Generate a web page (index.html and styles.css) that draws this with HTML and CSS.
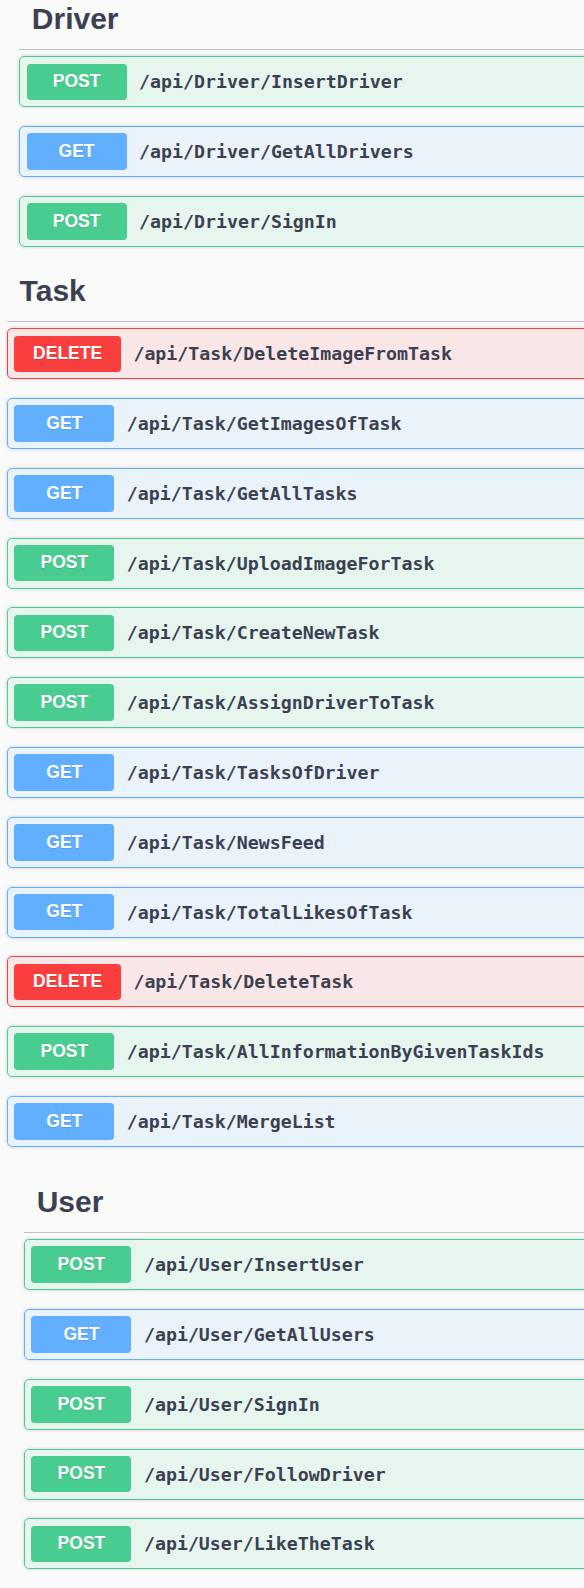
FILE: index.html
```html
<!DOCTYPE html>
<html lang="en">
<head>
<meta charset="utf-8">
<title>API</title>
<link rel="stylesheet" href="styles.css">
</head>
<body>
<section class="tag-section driver">
  <h3 class="tag">Driver</h3>
  <div class="op post"><span class="method">POST</span><span class="path">/api/Driver/InsertDriver</span></div>
  <div class="op get"><span class="method">GET</span><span class="path">/api/Driver/GetAllDrivers</span></div>
  <div class="op post"><span class="method">POST</span><span class="path">/api/Driver/SignIn</span></div>
</section>
<section class="tag-section task">
  <h3 class="tag">Task</h3>
  <div class="op delete"><span class="method">DELETE</span><span class="path">/api/Task/DeleteImageFromTask</span></div>
  <div class="op get"><span class="method">GET</span><span class="path">/api/Task/GetImagesOfTask</span></div>
  <div class="op get"><span class="method">GET</span><span class="path">/api/Task/GetAllTasks</span></div>
  <div class="op post"><span class="method">POST</span><span class="path">/api/Task/UploadImageForTask</span></div>
  <div class="op post"><span class="method">POST</span><span class="path">/api/Task/CreateNewTask</span></div>
  <div class="op post"><span class="method">POST</span><span class="path">/api/Task/AssignDriverToTask</span></div>
  <div class="op get"><span class="method">GET</span><span class="path">/api/Task/TasksOfDriver</span></div>
  <div class="op get"><span class="method">GET</span><span class="path">/api/Task/NewsFeed</span></div>
  <div class="op get"><span class="method">GET</span><span class="path">/api/Task/TotalLikesOfTask</span></div>
  <div class="op delete"><span class="method">DELETE</span><span class="path">/api/Task/DeleteTask</span></div>
  <div class="op post"><span class="method">POST</span><span class="path">/api/Task/AllInformationByGivenTaskIds</span></div>
  <div class="op get"><span class="method">GET</span><span class="path">/api/Task/MergeList</span></div>
</section>
<section class="tag-section user">
  <h3 class="tag">User</h3>
  <div class="op post"><span class="method">POST</span><span class="path">/api/User/InsertUser</span></div>
  <div class="op get"><span class="method">GET</span><span class="path">/api/User/GetAllUsers</span></div>
  <div class="op post"><span class="method">POST</span><span class="path">/api/User/SignIn</span></div>
  <div class="op post"><span class="method">POST</span><span class="path">/api/User/FollowDriver</span></div>
  <div class="op post"><span class="method">POST</span><span class="path">/api/User/LikeTheTask</span></div>
</section>
</body>
</html>
```
FILE: styles.css
```css
html, body {
  margin: 0;
  padding: 0;
  background: #fafafa;
  overflow: hidden;
}

body {
  display: flex;
  flex-direction: column;
  font-family: "Liberation Sans", Arial, sans-serif;
  color: #3b4151;
}

.tag-section {
  margin-right: -80px;
}

.driver {
  margin-left: 19.3px;
  margin-top: -10.5px;
}

.task {
  margin-left: 7.1px;
  margin-top: -4.15px;
}

.user {
  margin-left: 24.2px;
  margin-top: 6.65px;
}

.tag {
  margin: 0 0 6.25px;
  padding: 12.5px 25px 12.5px 12.5px;
  font: bold 30px/34.5px "Liberation Sans", Arial, sans-serif;
  color: #3b4151;
  border-bottom: 1px solid rgba(59, 65, 81, 0.3);
}

.op {
  display: flex;
  align-items: center;
  padding: 6.25px;
  border: 1px solid;
  border-radius: 5px;
  margin-bottom: 18.8px;
  box-shadow: 0 0 3.75px rgba(0, 0, 0, 0.19);
}

.method {
  box-sizing: border-box;
  min-width: 100px;
  padding: 7.5px 18.75px 9px;
  font: bold 17.5px/20px "Liberation Sans", Arial, sans-serif;
  color: #fff;
  text-align: center;
  border-radius: 3.75px;
  text-shadow: 0 1.25px 0 rgba(0, 0, 0, 0.1);
}

.path {
  padding: 0 12.5px;
  font: bold 18.25px "DejaVu Sans Mono", monospace;
  color: #3b4151;
  white-space: nowrap;
}

.post {
  background: rgba(73, 204, 144, 0.1);
  border-color: #49cc90;
}
.post .method {
  background: #49cc90;
}

.get {
  background: rgba(97, 175, 254, 0.1);
  border-color: #61affe;
}
.get .method {
  background: #61affe;
}

.delete {
  background: rgba(249, 62, 62, 0.1);
  border-color: #f93e3e;
}
.delete .method {
  background: #f93e3e;
}
```
